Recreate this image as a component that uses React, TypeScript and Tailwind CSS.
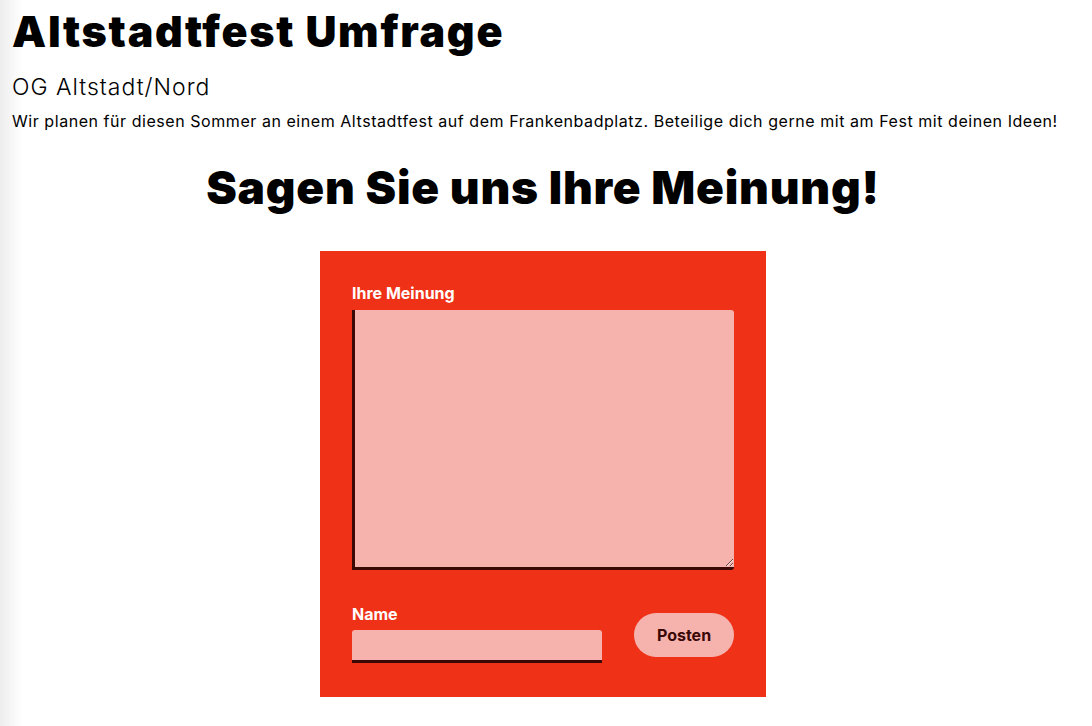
export default function App() {
  return (
    <div className="min-h-[726px] bg-[linear-gradient(to_right,#ededed,#ffffff_22px)] font-['Inter','Noto_Sans',sans-serif] text-black">
      <header className="px-3 pt-[5px]">
        <h1 className="text-[43px] font-black leading-[52px] tracking-[1.7px]">Altstadtfest Umfrage</h1>
        <h2 className="mt-4 text-[23px] font-light leading-[28px] tracking-[1px]">OG Altstadt/Nord</h2>
        <p className="mt-2 text-[16px] leading-[24px] tracking-[0.55px]">
          Wir planen für diesen Sommer an einem Altstadtfest auf dem Frankenbadplatz. Beteilige dich gerne mit am Fest mit deinen Ideen!
        </p>
      </header>

      <main className="mt-[26px] flex flex-col items-center pr-[6px]">
        <h2 className="text-[46px] font-black leading-[56px] tracking-[0.75px]">Sagen Sie uns Ihre Meinung!</h2>

        <form className="mt-9 w-[446px] bg-[#ef3118] px-8 pt-8 pb-[34px]">
          <label className="block">
            <span className="mb-[7px] block text-[16px] font-bold leading-5 text-white">Ihre Meinung</span>
            <textarea className="block h-[260px] w-full rounded-[3px] rounded-l-none border-b-[3px] border-l-[3px] border-[#3a0905] bg-[#f6b3ae] p-2 text-[#3a0905] outline-none" />
          </label>

          <div className="mt-[34px] flex items-center gap-8">
            <label className="block w-[250px]">
              <span className="mb-1.5 block text-[16px] font-bold leading-5 text-white">Name</span>
              <input
                type="text"
                className="block h-[33px] w-full rounded-t-[3px] border-b-[3px] border-[#3a0905] bg-[#f6b3ae] px-2 text-[#3a0905] outline-none"
              />
            </label>
            <button
              type="button"
              className="mt-[2px] h-[44px] w-[100px] rounded-full bg-[#f6b3ae] text-[16px] font-bold text-[#3a0905]"
            >
              Posten
            </button>
          </div>
        </form>
      </main>
    </div>
  );
}
